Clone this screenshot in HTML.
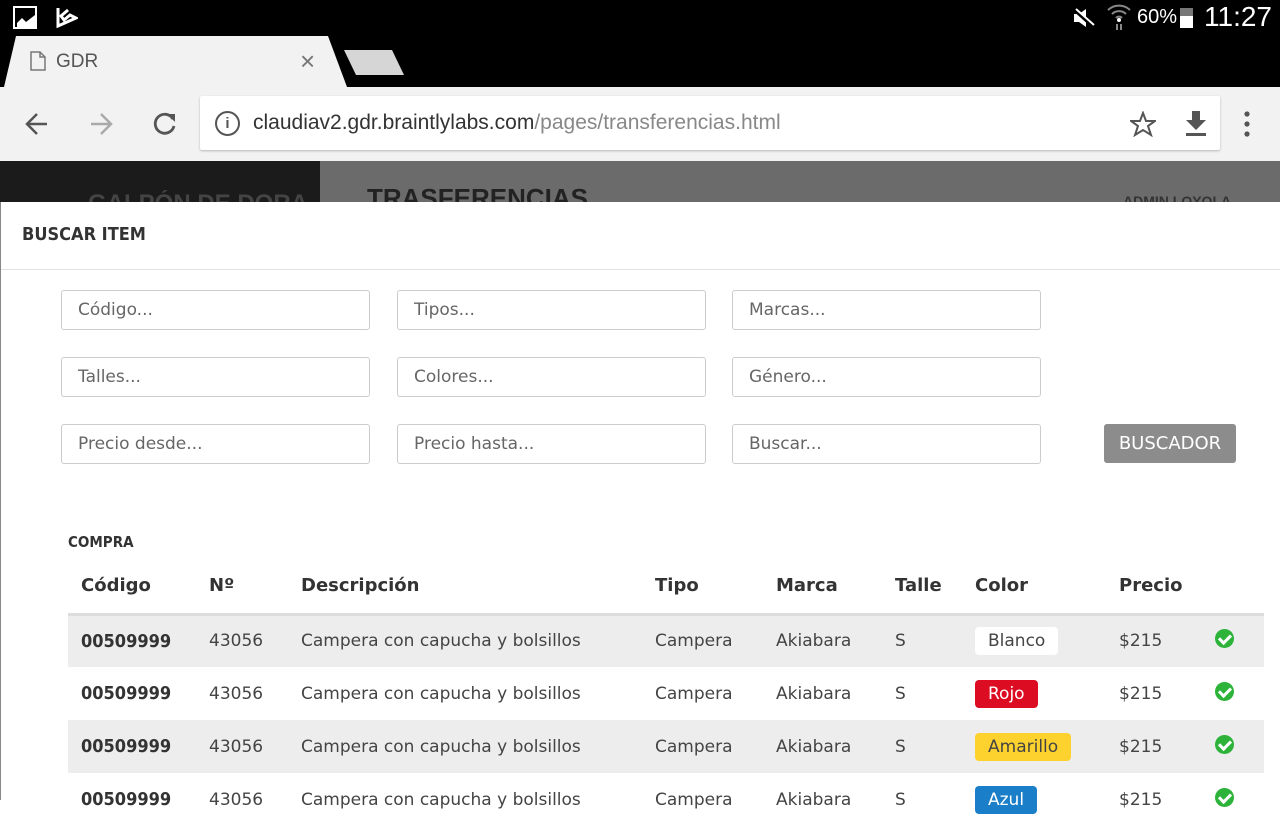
<!DOCTYPE html>
<html><head><meta charset="utf-8"><style>
*{margin:0;padding:0;box-sizing:border-box}
body{width:1280px;height:800px;overflow:hidden;font-family:"Liberation Sans",sans-serif;background:#fff;position:relative}
.abs{position:absolute}
.sb{left:0;top:0;width:1280px;height:33px;background:#000;color:#fff}
.tabs{left:0;top:33px;width:1280px;height:54px;background:#000}
.tb{left:0;top:87px;width:1280px;height:74px;background:#f2f2f2}
.url{left:200px;top:96px;width:1020px;height:54px;background:#fff;border-radius:2px;box-shadow:0 1px 2px rgba(0,0,0,.25)}
.modal{left:0;top:202px;width:1280px;height:598px;background:#fff;border-left:1px solid #888}
.inp{position:absolute;width:309px;height:40px;border:1.5px solid #ccc;border-radius:3px;color:#666;padding:9px 16px;font-family:"DejaVu Sans","Liberation Sans",sans-serif;font-size:17px}
table{position:absolute;left:68px;top:566px;width:1196px;border-collapse:collapse;font-family:"DejaVu Sans","Liberation Sans",sans-serif;color:#333}
th{text-align:left;font-size:18px;height:48px;padding:0 0 8px 13px;border-bottom:3px solid #ddd}
td{height:53px;font-size:17px;padding-left:13px;color:#444}
tr.g td{background:#ededed}
td.b{font-weight:bold;color:#333;font-family:"DejaVu Sans Condensed","Liberation Sans",sans-serif;font-size:18px}
.tag{display:inline-block;padding:4px 13px;border-radius:4px}
.ok{display:inline-block;width:19px;height:19px;border-radius:50%;background:#2db33a;position:relative}
.ok:after{content:"";position:absolute;left:6px;top:3px;width:5px;height:9px;border:solid #fff;border-width:0 3px 3px 0;transform:rotate(45deg)}
</style></head><body>
<div class="abs sb">
<div class="abs" style="left:13px;top:6px;width:24px;height:23px;border:2px solid #fff"><svg class="abs" style="left:2px;top:5px" width="18" height="14"><path d="M0 14 L0 10 L5 5 L9 9 L18 2 L18 14Z" fill="#fff"/></svg></div>
<svg class="abs" style="left:56px;top:6px" width="22" height="22"><path d="M2 2 L2 20 L20 12 L14 9 L8 14 L5 10 L12 4" fill="none" stroke="#fff" stroke-width="3"/></svg>
<svg class="abs" style="left:1072px;top:7px" width="24" height="22"><path d="M2 7 H7 L14 2 V20 L7 15 H2Z" fill="#fff"/><path d="M2 2 L22 20" stroke="#000" stroke-width="4"/><path d="M4 2 L22 18" stroke="#fff" stroke-width="2"/></svg>
<svg class="abs" style="left:1106px;top:2px" width="26" height="28"><path d="M2 8 A16 16 0 0 1 24 8 M6 12 A10 10 0 0 1 20 12 M10 16 A4 4 0 0 1 16 16" fill="none" stroke="#888" stroke-width="2"/><circle cx="13" cy="18" r="2" fill="#fff"/><path d="M11 22 V28 M15 22 V28" stroke="#888" stroke-width="2"/></svg>
<div class="abs" style="left:1137px;top:6px;font-size:20px">60%</div>
<div class="abs" style="left:1180px;top:8px;width:13px;height:20px;background:#fff;border-top:8px solid #777"></div>
<div class="abs" style="left:1204px;top:1px;font-size:28px">11:27</div>
</div>
<div class="abs tabs">
<svg class="abs" style="left:0;top:3px" width="410" height="51"><path d="M4 51 L16 0 H328 L347 51Z" fill="#f2f2f2"/><path d="M344 14 L392 14 L404 39 L356 39Z" fill="#d6d6d6"/></svg>
<svg class="abs" style="left:30px;top:18px" width="16" height="20"><path d="M1 1 H10 L15 6 V19 H1Z M10 1 V6 H15" fill="none" stroke="#777" stroke-width="1.5"/></svg>
<div class="abs" style="left:56px;top:18px;font-size:19px;color:#555">GDR</div>
<div class="abs" style="left:300px;top:13px;font-size:26px;color:#777">×</div>
</div>
<div class="abs tb">
<svg class="abs" style="left:24px;top:24px" width="26" height="26"><path d="M23 13 H4 M13 3 L3 13 L13 23" fill="none" stroke="#555" stroke-width="2.5"/></svg>
<svg class="abs" style="left:88px;top:24px" width="26" height="26"><path d="M3 13 H22 M13 3 L23 13 L13 23" fill="none" stroke="#aaa" stroke-width="2.5"/></svg>
<svg class="abs" style="left:152px;top:24px" width="26" height="26"><path d="M21 8 A9.5 9.5 0 1 0 22 15" fill="none" stroke="#555" stroke-width="2.8"/><path d="M15 3 L23 3 L23 11Z" fill="#555"/></svg>
</div>
<div class="abs url">
<div class="abs" style="left:15px;top:15px;width:25px;height:25px;border:2px solid #555;border-radius:50%;font-size:15px;text-align:center;color:#555;font-weight:bold;line-height:21px">i</div>
<div class="abs" style="left:53px;top:15px;font-size:21px;color:#333">claudiav2.gdr.braintlylabs.com<span style="color:#888">/pages/transferencias.html</span></div>
<svg class="abs" style="left:930px;top:15px" width="26" height="26"><path d="M13 2 L16 10 L25 10 L18 15 L21 24 L13 19 L5 24 L8 15 L1 10 L10 10Z" fill="none" stroke="#555" stroke-width="2"/></svg>
<svg class="abs" style="left:985px;top:15px" width="22" height="26"><path d="M7 0 H15 V9 H21 L11 19 L1 9 H7Z" fill="#555"/><rect x="1" y="22" width="20" height="3" fill="#555"/></svg>
</div>
<svg class="abs" style="left:1242px;top:111px" width="10" height="26"><circle cx="5" cy="3" r="2.6" fill="#555"/><circle cx="5" cy="13" r="2.6" fill="#555"/><circle cx="5" cy="23" r="2.6" fill="#555"/></svg>
<div class="abs" style="left:0;top:161px;width:320px;height:41px;background:#1b1b1b"></div>
<div class="abs" style="left:320px;top:161px;width:960px;height:41px;background:#6b6b6b"></div>
<div class="abs" style="left:367px;top:183px;font-size:26px;font-weight:bold;color:#222;height:19px;overflow:hidden">TRASFERENCIAS</div>
<div class="abs" style="left:88px;top:190px;font-size:24px;font-weight:bold;color:#444;height:12px;overflow:hidden">GALPÓN DE DORA</div>
<div class="abs" style="left:1123px;top:193px;font-size:14px;font-weight:bold;color:#333;height:9px;overflow:hidden">ADMIN LOYOLA</div>
<div class="abs modal">
<div class="abs" style="left:21px;top:22px;font-size:18px;font-weight:bold;color:#333;font-family:'DejaVu Sans Condensed','Liberation Sans',sans-serif">BUSCAR ITEM</div>
<div class="abs" style="left:0;top:67px;width:1280px;height:1px;background:#e2e2e2"></div>
</div>
<div class="inp" style="left:61px;top:290px">Código...</div>
<div class="inp" style="left:397px;top:290px">Tipos...</div>
<div class="inp" style="left:732px;top:290px">Marcas...</div>
<div class="inp" style="left:61px;top:357px">Talles...</div>
<div class="inp" style="left:397px;top:357px">Colores...</div>
<div class="inp" style="left:732px;top:357px">Género...</div>
<div class="inp" style="left:61px;top:424px">Precio desde...</div>
<div class="inp" style="left:397px;top:424px">Precio hasta...</div>
<div class="inp" style="left:732px;top:424px">Buscar...</div>
<div class="abs" style="left:1104px;top:424px;width:132px;height:39px;background:#8c8c8c;border-radius:3px;color:#fff;font-size:18px;text-align:center;line-height:39px;font-family:'DejaVu Sans','Liberation Sans',sans-serif">BUSCADOR</div>
<div class="abs" style="left:68px;top:533px;font-size:15px;font-weight:bold;color:#333;font-family:'DejaVu Sans Condensed','Liberation Sans',sans-serif">COMPRA</div>
<table>
<tr><th style="width:128px">Código</th><th style="width:92px">Nº</th><th style="width:354px">Descripción</th><th style="width:121px">Tipo</th><th style="width:119px">Marca</th><th style="width:80px">Talle</th><th style="width:144px">Color</th><th style="width:96px">Precio</th><th></th></tr>
<tr class="g"><td class="b">00509999</td><td>43056</td><td>Campera con capucha y bolsillos</td><td>Campera</td><td>Akiabara</td><td>S</td><td><span class="tag" style="background:#fff">Blanco</span></td><td>$215</td><td><span class="ok"></span></td></tr>
<tr><td class="b">00509999</td><td>43056</td><td>Campera con capucha y bolsillos</td><td>Campera</td><td>Akiabara</td><td>S</td><td><span class="tag" style="background:#dc0c22;color:#fff">Rojo</span></td><td>$215</td><td><span class="ok"></span></td></tr>
<tr class="g"><td class="b">00509999</td><td>43056</td><td>Campera con capucha y bolsillos</td><td>Campera</td><td>Akiabara</td><td>S</td><td><span class="tag" style="background:#fdd22e">Amarillo</span></td><td>$215</td><td><span class="ok"></span></td></tr>
<tr><td class="b">00509999</td><td>43056</td><td>Campera con capucha y bolsillos</td><td>Campera</td><td>Akiabara</td><td>S</td><td><span class="tag" style="background:#1a7fc8;color:#fff">Azul</span></td><td>$215</td><td><span class="ok"></span></td></tr>
</table>
</body></html>
